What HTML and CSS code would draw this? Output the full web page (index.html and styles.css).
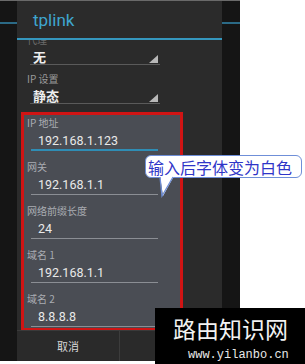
FILE: index.html
```html
<!DOCTYPE html>
<html lang="zh">
<head>
<meta charset="utf-8">
<link rel="stylesheet" href="styles.css">
</head>
<body>
<div class="page">
  <div class="screen">
    <div class="dialog">
      <div class="title">tplink</div>
      <div class="body">
        <div class="content">
          <div class="spin">
            <div class="slbl faint">代理</div>
            <div class="sval"><span>无</span><i class="tri"></i></div>
          </div>
          <div class="spin">
            <div class="slbl">IP 设置</div>
            <div class="sval"><span>静态</span><i class="tri"></i></div>
          </div>
          <div class="box">
            <div class="field">
              <div class="lbl">IP 地址</div>
              <div class="val active">192.168.1.123</div>
            </div>
            <div class="field">
              <div class="lbl">网关</div>
              <div class="val">192.168.1.1</div>
            </div>
            <div class="field">
              <div class="lbl">网络前缀长度</div>
              <div class="val">24</div>
            </div>
            <div class="field">
              <div class="lbl">域名 1</div>
              <div class="val">192.168.1.1</div>
            </div>
            <div class="field">
              <div class="lbl">域名 2</div>
              <div class="val">8.8.8.8</div>
            </div>
          </div>
        </div>
      </div>
      <div class="buttons">
        <div class="btn">取消</div>
        <div class="btn"></div>
      </div>
    </div>
  </div>

  <div class="callout">
    <span class="callout-text">输入后字体变为白色</span>
    <svg class="tail" width="20" height="22" viewBox="0 0 20 22">
      <polygon points="2,0 16,0 5,20" fill="#fff"/>
      <polyline points="2,1 4,20 15,1" fill="none" stroke="#6f8fd8" stroke-width="1.3"/>
    </svg>
  </div>

  <div class="watermark">
    <div class="wm-title">路由知识网</div>
    <div class="wm-url">www.yilanbo.cn</div>
  </div>
</div>
</body>
</html>
```

FILE: styles.css
```css
* { box-sizing: border-box; }

html, body {
  margin: 0;
  padding: 0;
  background: #ffffff;
}

.page {
  position: relative;
  width: 305px;
  height: 364px;
  overflow: hidden;
  font-family: Roboto, "Noto Sans CJK SC", sans-serif;
}

.screen {
  width: 240px;
  height: 361px;
  border-top: 1px solid #6a6a6a;
  background: linear-gradient(to bottom, #151515 21px, #2b6a86 21px, #2b6a86 23px, #151515 23px);
  display: flex;
}

.dialog {
  margin-left: 17px;
  width: 205px;
  height: 360px;
  background: #2b2b2b;
  display: flex;
  flex-direction: column;
}

.title {
  height: 39px;
  padding-left: 16px;
  border-bottom: 2px solid #3597be;
  color: #3fa6cf;
  font-size: 17px;
  line-height: 38px;
  font-family: Roboto, sans-serif;
}

.body {
  flex: 1;
  overflow: hidden;
}

.content {
  margin-top: -6px;
}

.spin {
  margin-bottom: 8px;
}

.slbl {
  height: 12px;
  line-height: 12px;
  padding-left: 10px;
  font-size: 10px;
  color: #9a9a9a;
  font-family: "Noto Sans CJK SC", sans-serif;
}

.slbl.faint {
  color: #6a6a6a;
}

.sval {
  margin-left: 13px;
  width: 130px;
  height: 19px;
  padding-left: 3px;
  border-bottom: 1px solid #5a5a5a;
  display: flex;
  align-items: flex-end;
}

.sval span {
  align-self: flex-start;
  line-height: 22px;
  height: 19px;
  font-size: 13px;
  font-weight: bold;
  color: #eeeeee;
  font-family: "Noto Sans CJK SC", sans-serif;
}

.tri {
  margin-left: auto;
  margin-right: 2px;
  margin-bottom: 1px;
  width: 9px;
  height: 8px;
  background: #b8b8b8;
  clip-path: polygon(100% 0, 100% 100%, 0 100%);
}

.box {
  margin-top: 5px;
  margin-left: 4px;
  width: 162px;
  height: 219px;
  border: 3px solid #d01414;
  background: #4a4d54;
  padding-top: 2px;
  overflow: hidden;
}

.field {
  margin-bottom: 10px;
}

.lbl {
  height: 12px;
  line-height: 12px;
  padding-left: 3px;
  font-size: 10px;
  color: #a9acb2;
  font-family: "Noto Sans CJK SC", sans-serif;
}

.val {
  margin-top: 2px;
  margin-left: 7px;
  width: 127px;
  height: 20px;
  line-height: 19px;
  padding-left: 7px;
  border-bottom: 1px solid #8b8e94;
  font-size: 12.5px;
  color: #e9e9e9;
  font-family: Roboto, sans-serif;
}

.val.active {
  border-bottom: 2px solid #2f8db5;
}

.buttons {
  height: 31px;
  display: flex;
  border-top: 1px solid #3a3a3a;
  background: #2a2a2a;
}

.btn {
  flex: 1;
  display: flex;
  align-items: center;
  justify-content: center;
  font-size: 11px;
  color: #d8d8d8;
  font-family: "Noto Sans CJK SC", sans-serif;
}

.btn + .btn {
  border-left: 1px solid #3c3c3c;
}

.callout {
  position: absolute;
  left: 145px;
  top: 155px;
  width: 157px;
  height: 23px;
  border: 1.3px solid #6f8fd8;
  border-radius: 6px;
  background: #ffffff;
  display: flex;
  align-items: center;
  padding-left: 2px;
}

.callout-text {
  font-family: "Noto Sans CJK SC", sans-serif;
  font-size: 16px;
  line-height: 20px;
  color: #2f35c8;
  white-space: nowrap;
}

.tail {
  position: absolute;
  left: 12px;
  top: 20px;
}

.watermark {
  position: absolute;
  left: 155px;
  top: 308px;
  width: 150px;
  height: 56px;
  background: #000000;
  display: flex;
  flex-direction: column;
  align-items: flex-start;
}

.wm-title {
  margin-left: 18px;
  margin-top: 6px;
  height: 28px;
  line-height: 28px;
  font-size: 23px;
  color: #f2f2f2;
  font-family: "Noto Sans CJK SC", serif;
}

.wm-url {
  margin-left: 33px;
  margin-top: 7px;
  line-height: 12px;
  font-size: 12px;
  color: #e8e8e8;
  font-family: "Liberation Mono", monospace;
}
```
